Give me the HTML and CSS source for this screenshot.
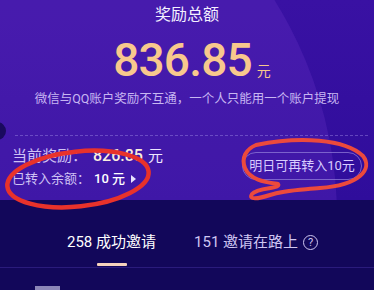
FILE: index.html
```html
<!DOCTYPE html>
<html lang="zh">
<head>
<meta charset="utf-8">
<link rel="stylesheet" href="styles.css">
</head>
<body>
<div class="page">
  <section class="card">
    <div class="glow"></div>
    <div class="notch"></div>
    <h1 class="title">奖励总额</h1>
    <div class="amount"><span class="num">836.85</span><span class="unit">元</span></div>
    <p class="note">微信与QQ账户奖励不互通，一个人只能用一个账户提现</p>
    <div class="dash"></div>
    <div class="info">
      <div class="lines">
        <div class="cur"><span class="label">当前奖励：</span><span class="val">826.85</span><span class="yuan">元</span></div>
        <div class="moved"><span class="label">已转入余额：</span><span class="val2">10 元</span><span class="tri"></span></div>
      </div>
      <div class="btn">明日可再转入10元</div>
    </div>
  </section>
  <section class="tabs">
    <div class="tab active"><span class="t">258 成功邀请</span><span class="bar"></span></div>
    <div class="tab"><span class="t">151 邀请在路上 <span class="q">?</span></span></div>
  </section>
  <div class="list"><div class="avatar"></div></div>
  <svg class="marks" width="374" height="290" viewBox="0 0 374 290">
    <ellipse cx="78" cy="179" rx="71" ry="27.5" transform="rotate(-6 78 179)" fill="none" stroke="#e8322b" stroke-width="4.5"/>
    <path d="M256 145 C 300 136, 345 139, 363 156 C 373 169, 360 185, 320 188 C 300 190, 284 190, 270 195 C 258 199, 248 200, 252 194 C 258 187, 282 189, 278 184 C 265 182, 250 180, 245 168 C 241 158, 246 149, 256 145 Z" fill="none" stroke="#ec4a3c" stroke-width="4" stroke-linejoin="round"/>
  </svg>
</div>
</body>
</html>
```
FILE: styles.css
```css
* { box-sizing: border-box; margin: 0; padding: 0; }
body {
  margin: 0;
  background: #12075a;
  font-family: Roboto, "Noto Sans CJK SC", sans-serif;
  overflow: hidden;
}
.page { position: relative; width: 374px; height: 290px; }
.card {
  position: relative;
  height: 200px;
  overflow: hidden;
  background: linear-gradient(180deg, #3911a3 0%, #2f0d9b 100%);
  display: flex;
  flex-direction: column;
}
.glow {
  position: absolute;
  left: -485px;
  top: -193px;
  width: 822px;
  height: 822px;
  border-radius: 50%;
  background: rgba(150, 80, 230, 0.16);
}
.notch {
  position: absolute;
  left: -12px;
  top: 122px;
  width: 18px;
  height: 18px;
  border-radius: 50%;
  background: #1a0a5e;
}
.title {
  position: relative;
  text-align: center;
  font-size: 16px;
  line-height: 20px;
  font-weight: 400;
  color: #f4f0ff;
  margin-top: 5px;
}
.amount {
  position: relative;
  display: flex;
  justify-content: center;
  align-items: baseline;
  margin-top: 10px;
  padding-left: 10px;
}
.num {
  font-size: 46px;
  line-height: 50px;
  font-weight: 500;
  color: #f8c88d;
  letter-spacing: -0.8px;
}
.unit {
  font-size: 14px;
  color: #f8c88d;
  margin-left: 5px;
}
.note {
  position: relative;
  text-align: center;
  font-size: 12.5px;
  line-height: 18px;
  color: #c7b6f2;
  margin-top: 5px;
}
.dash {
  position: relative;
  margin: 27px 6px 0 15px;
  border-top: 1px dashed rgba(160, 140, 230, 0.45);
}
.info {
  position: relative;
  display: flex;
  justify-content: space-between;
  align-items: center;
  padding: 0 12px 0 12px;
  margin-top: 9px;
}
.lines { display: flex; flex-direction: column; }
.cur { display: flex; align-items: baseline; line-height: 22px; }
.cur .label { font-size: 15px; color: #cfc2f4; }
.cur .val { font-size: 16px; font-weight: 500; color: #fbeede; margin-left: 6px; }
.cur .yuan { font-size: 15px; color: #ece6ff; margin-left: 5px; }
.moved { display: flex; align-items: center; line-height: 20px; margin-top: 2px; }
.moved .label { font-size: 13px; color: #cfc2f4; }
.moved .val2 { font-size: 13px; font-weight: 500; color: #ffffff; margin-left: 4px; }
.tri {
  width: 0; height: 0;
  border-left: 5px solid #e8e2ff;
  border-top: 4px solid transparent;
  border-bottom: 4px solid transparent;
  margin-left: 6px;
}
.btn {
  width: 120px;
  height: 28px;
  border: 1px solid rgba(150, 130, 220, 0.7);
  border-radius: 14px;
  font-size: 13px;
  line-height: 26px;
  text-align: center;
  color: #d8ccff;
  margin-top: -2px;
}
.tabs {
  display: flex;
  gap: 38px;
  padding-left: 67px;
  height: 68px;
  border-bottom: 1px solid #2a1b7c;
}
.tab { display: flex; flex-direction: column; align-items: center; }
.tab .t { font-size: 15px; line-height: 20px; color: #cfc6f2; margin-top: 32px; display: flex; align-items: center; }
.tab.active .t { color: #ffffff; }
.bar { width: 30px; height: 3px; background: #f6d3bd; margin-top: 11px; border-radius: 1px; }
.q {
  display: inline-flex; align-items: center; justify-content: center;
  width: 15px; height: 15px; border: 1px solid #cfc6f2; border-radius: 50%;
  font-size: 11px; line-height: 1; margin-left: 5px;
}
.list { padding: 18px 0 0 35px; }
.avatar { width: 25px; height: 10px; background: #8c86b8; }
.marks { position: absolute; left: 0; top: 0; pointer-events: none; }
```
